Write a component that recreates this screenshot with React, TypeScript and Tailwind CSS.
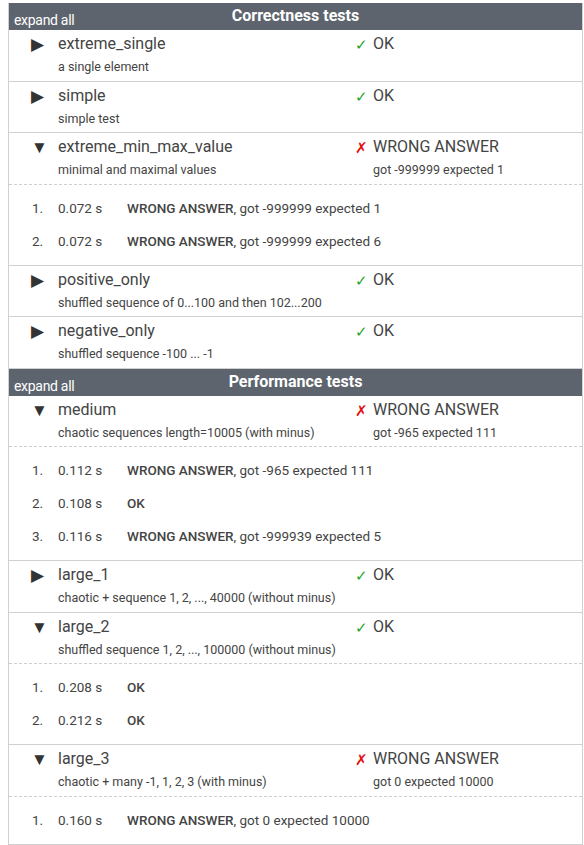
import React from "react";

type Sub = { t: string; ok: boolean; msg?: string };
type Test = {
  name: string;
  desc: string;
  ok: boolean;
  detail?: string;
  open: boolean;
  subs?: Sub[];
};

const correctness: Test[] = [
  { name: "extreme_single", desc: "a single element", ok: true, open: false },
  { name: "simple", desc: "simple test", ok: true, open: false },
  {
    name: "extreme_min_max_value",
    desc: "minimal and maximal values",
    ok: false,
    detail: "got -999999 expected 1",
    open: true,
    subs: [
      { t: "0.072 s", ok: false, msg: ", got -999999 expected 1" },
      { t: "0.072 s", ok: false, msg: ", got -999999 expected 6" },
    ],
  },
  { name: "positive_only", desc: "shuffled sequence of 0...100 and then 102...200", ok: true, open: false },
  { name: "negative_only", desc: "shuffled sequence -100 ... -1", ok: true, open: false },
];

const performance: Test[] = [
  {
    name: "medium",
    desc: "chaotic sequences length=10005 (with minus)",
    ok: false,
    detail: "got -965 expected 111",
    open: true,
    subs: [
      { t: "0.112 s", ok: false, msg: ", got -965 expected 111" },
      { t: "0.108 s", ok: true },
      { t: "0.116 s", ok: false, msg: ", got -999939 expected 5" },
    ],
  },
  { name: "large_1", desc: "chaotic + sequence 1, 2, ..., 40000 (without minus)", ok: true, open: false },
  {
    name: "large_2",
    desc: "shuffled sequence 1, 2, ..., 100000 (without minus)",
    ok: true,
    open: true,
    subs: [
      { t: "0.208 s", ok: true },
      { t: "0.212 s", ok: true },
    ],
  },
  {
    name: "large_3",
    desc: "chaotic + many -1, 1, 2, 3 (with minus)",
    ok: false,
    detail: "got 0 expected 10000",
    open: true,
    subs: [{ t: "0.160 s", ok: false, msg: ", got 0 expected 10000" }],
  },
];

function Header({ title }: { title: string }) {
  return (
    <div className="grid grid-cols-[1fr_auto_1fr] h-[27px] bg-[#5d646d] text-white">
      <span className="self-end pl-[5px] pb-[2px] text-[14px] leading-[16px] tracking-[-0.3px]">expand all</span>
      <span className="self-start pt-[4px] text-[16px] leading-[17px] font-bold">{title}</span>
      <span />
    </div>
  );
}

function Row({ test }: { test: Test }) {
  return (
    <div className="border-b border-[#d0d0d0]">
      <div className={`flex pt-[4px] pb-[5.5px] ${test.open ? "border-b border-dashed border-[#cfcfcf]" : ""}`}>
        <div className="w-[49px] pl-[22px] text-[17px] leading-[20px] text-[#333]">{test.open ? "▼" : "▶"}</div>
        <div className="w-[295px] shrink-0">
          <div className="text-[16px] leading-[20px] text-[#444]">{test.name}</div>
          <div className="mt-[5px] text-[12.5px] leading-[16px] text-[#444]">{test.desc}</div>
        </div>
        <div className="w-[16px] pt-[3px] text-[15px] leading-[17px] text-center">
          {test.ok ? (
            <span className="text-[#1fa51f]">✓</span>
          ) : (
            <span className="text-[#e01010]">✗</span>
          )}
        </div>
        <div className="pl-[4px]">
          <div className="text-[16px] leading-[20px] text-[#444]">{test.ok ? "OK" : "WRONG ANSWER"}</div>
          {test.detail && <div className="mt-[5px] text-[12.5px] leading-[16px] text-[#444]">{test.detail}</div>}
        </div>
      </div>
      {test.open && test.subs && (
        <div className="pt-[7px] pb-[7px]">
          {test.subs.map((s, i) => (
            <div key={i} className="flex h-[33px] items-center text-[13.5px] text-[#444]">
              <span className="w-[49px] pl-[23px]">{i + 1}.</span>
              <span className="w-[69px]">{s.t}</span>
              <span>
                <span className="font-medium">{s.ok ? "OK" : "WRONG ANSWER"}</span>
                {s.msg}
              </span>
            </div>
          ))}
        </div>
      )}
    </div>
  );
}

export default function App() {
  return (
    <div className="bg-white min-h-[845px] pt-[3px]" style={{ fontFamily: "Roboto, 'Liberation Sans', sans-serif" }}>
      <div className="ml-[8px] w-[575px] border-x border-[#d0d0d0]">
        <Header title="Correctness tests" />
        {correctness.map((t) => (
          <Row key={t.name} test={t} />
        ))}
        <Header title="Performance tests" />
        {performance.map((t) => (
          <Row key={t.name} test={t} />
        ))}
      </div>
    </div>
  );
}
